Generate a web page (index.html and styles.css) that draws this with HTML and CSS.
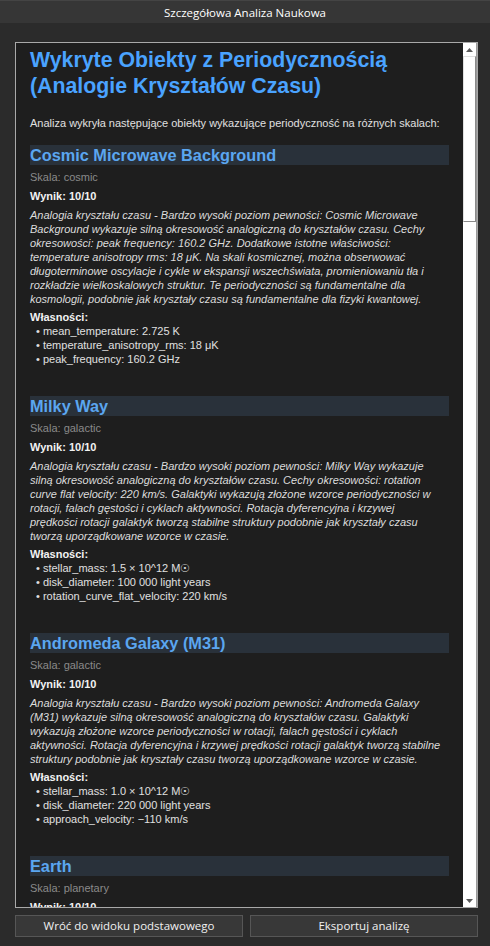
FILE: index.html
```html
<!DOCTYPE html>
<html lang="pl">
<head>
<meta charset="utf-8">
<title>Szczegółowa Analiza Naukowa</title>
<link rel="stylesheet" href="styles.css">
</head>
<body>
<div class="titlebar">Szczegółowa Analiza Naukowa</div>
<div class="window">
  <div class="viewer">
    <div class="doc">
      <h1>Wykryte Obiekty z Periodycznością (Analogie Kryształów Czasu)</h1>
      <p class="intro">Analiza wykryła następujące obiekty wykazujące periodyczność na różnych skalach:</p>

      <section class="obj">
        <h2>Cosmic Microwave Background</h2>
        <div class="scale">Skala: cosmic</div>
        <div class="score">Wynik: 10/10</div>
        <p class="analogy">Analogia kryształu czasu - Bardzo wysoki poziom pewności: Cosmic Microwave<br>Background wykazuje silną okresowość analogiczną do kryształów czasu. Cechy<br>okresowości: peak frequency: 160.2 GHz. Dodatkowe istotne właściwości:<br>temperature anisotropy rms: 18 μK. Na skali kosmicznej, można obserwować<br>długoterminowe oscylacje i cykle w ekspansji wszechświata, promieniowaniu tła i<br>rozkładzie wielkoskalowych struktur. Te periodyczności są fundamentalne dla<br>kosmologii, podobnie jak kryształy czasu są fundamentalne dla fizyki kwantowej.</p>
        <div class="props-label">Własności:</div>
        <ul class="props">
          <li>mean_temperature: 2.725 K</li>
          <li>temperature_anisotropy_rms: 18 μK</li>
          <li>peak_frequency: 160.2 GHz</li>
        </ul>
      </section>

      <section class="obj">
        <h2>Milky Way</h2>
        <div class="scale">Skala: galactic</div>
        <div class="score">Wynik: 10/10</div>
        <p class="analogy">Analogia kryształu czasu - Bardzo wysoki poziom pewności: Milky Way wykazuje<br>silną okresowość analogiczną do kryształów czasu. Cechy okresowości: rotation<br>curve flat velocity: 220 km/s. Galaktyki wykazują złożone wzorce periodyczności w<br>rotacji, falach gęstości i cyklach aktywności. Rotacja dyferencyjna i krzywej<br>prędkości rotacji galaktyk tworzą stabilne struktury podobnie jak kryształy czasu<br>tworzą uporządkowane wzorce w czasie.</p>
        <div class="props-label">Własności:</div>
        <ul class="props">
          <li>stellar_mass: 1.5 × 10^12 M☉</li>
          <li>disk_diameter: 100 000 light years</li>
          <li>rotation_curve_flat_velocity: 220 km/s</li>
        </ul>
      </section>

      <section class="obj">
        <h2>Andromeda Galaxy (M31)</h2>
        <div class="scale">Skala: galactic</div>
        <div class="score">Wynik: 10/10</div>
        <p class="analogy">Analogia kryształu czasu - Bardzo wysoki poziom pewności: Andromeda Galaxy<br>(M31) wykazuje silną okresowość analogiczną do kryształów czasu. Galaktyki<br>wykazują złożone wzorce periodyczności w rotacji, falach gęstości i cyklach<br>aktywności. Rotacja dyferencyjna i krzywej prędkości rotacji galaktyk tworzą stabilne<br>struktury podobnie jak kryształy czasu tworzą uporządkowane wzorce w czasie.</p>
        <div class="props-label">Własności:</div>
        <ul class="props">
          <li>stellar_mass: 1.0 × 10^12 M☉</li>
          <li>disk_diameter: 220 000 light years</li>
          <li>approach_velocity: −110 km/s</li>
        </ul>
      </section>

      <section class="obj">
        <h2>Earth</h2>
        <div class="scale">Skala: planetary</div>
        <div class="score">Wynik: 10/10</div>
      </section>
    </div>
    <div class="scrollbar">
      <div class="sb-btn">
        <svg width="7" height="4" viewBox="0 0 7 4"><path d="M0 4 L3.5 0 L7 4 Z" fill="#5a5a5a"/></svg>
      </div>
      <div class="sb-track">
        <div class="sb-thumb"></div>
      </div>
      <div class="sb-btn">
        <svg width="7" height="4" viewBox="0 0 7 4"><path d="M0 0 L3.5 4 L7 0 Z" fill="#5a5a5a"/></svg>
      </div>
    </div>
  </div>
  <div class="buttons">
    <div class="btn" role="button">Wróć do widoku podstawowego</div>
    <div class="btn" role="button">Eksportuj analizę</div>
  </div>
</div>
</body>
</html>
```

FILE: styles.css
```css
html, body {
  margin: 0;
  padding: 0;
  width: 490px;
  height: 946px;
  overflow: hidden;
  background: #2b2b2b;
}

.titlebar {
  box-sizing: border-box;
  height: 23px;
  padding-top: 3px;
  background: #363636;
  border-top: 1px solid #444;
  color: #ffffff;
  font: 11.5px/17px "Open Sans", "Noto Sans", sans-serif;
  text-align: center;
}

.window {
  padding: 19px 12px 0 15px;
}

.viewer {
  box-sizing: border-box;
  height: 866px;
  display: flex;
  background: #1e1e1e;
  border: 1px solid #a9a9a9;
}

.doc {
  flex: 1;
  min-width: 0;
  overflow: hidden;
  padding: 4px 14px 0 14px;
  font: 11px/14px "Liberation Sans", Arial, sans-serif;
  color: #e0e0e0;
}

.doc h1 {
  margin: 0;
  font: bold 21.3px/26px "Liberation Sans", Arial, sans-serif;
  color: #4aa3ff;
}

.intro {
  margin: 17px 0 15px;
}

.obj + .obj {
  margin-top: 30px;
}

.obj h2 {
  margin: 0;
  height: 20px;
  font: bold 16.3px/20px "Liberation Sans", Arial, sans-serif;
  color: #5ba6f0;
  background: #29313a;
}

.scale {
  margin-top: 5px;
  color: #8a8a8a;
}

.score {
  margin-top: 5px;
  font-weight: bold;
  color: #f2f2f2;
}

.analogy {
  margin: 5px 0 0;
  font-style: italic;
  color: #dcdcdc;
  white-space: nowrap;
}

.props-label {
  margin-top: 5px;
  line-height: 13px;
  font-weight: bold;
  color: #f2f2f2;
}

.props {
  list-style: none;
  margin: 0;
  padding: 0 0 0 6px;
}

.props li::before {
  content: "• ";
}

.scrollbar {
  width: 13px;
  display: flex;
  flex-direction: column;
  background: #ffffff;
  border-right: 1px solid #9a9a9a;
}

.sb-btn {
  height: 13px;
  display: flex;
  align-items: center;
  justify-content: center;
  background: #ffffff;
}

.sb-track {
  flex: 1;
  background: #ffffff;
}

.sb-thumb {
  box-sizing: border-box;
  height: 166px;
  background: #ffffff;
  border-right: 1px solid #8a8a8a;
  border-bottom: 1px solid #8a8a8a;
  border-top: 1px solid #e0e0e0;
  border-left: 1px solid #e0e0e0;
}

.buttons {
  display: flex;
  gap: 7px;
  margin-top: 7px;
}

.btn {
  flex: 1;
  box-sizing: border-box;
  height: 22px;
  display: flex;
  align-items: center;
  justify-content: center;
  background: #383838;
  border: 1px solid #565656;
  color: #f0f0f0;
  font: 11.5px/18px "Open Sans", "Noto Sans", sans-serif;
}
```
